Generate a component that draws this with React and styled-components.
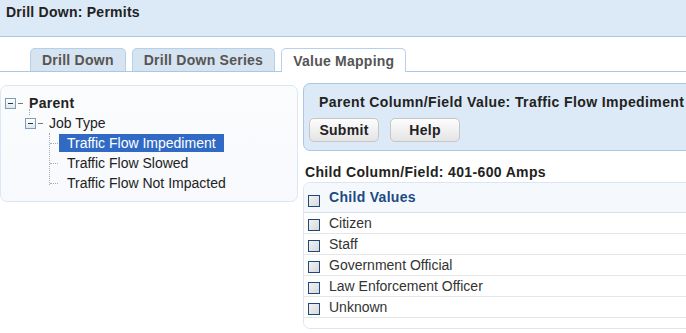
import React from 'react'
import styled, { createGlobalStyle } from 'styled-components'

const Global = createGlobalStyle`
  html, body {
    margin: 0;
    padding: 0;
    background: #fff;
    overflow: hidden;
  }
  body {
    font-family: "Liberation Sans", Arial, sans-serif;
    font-size: 14px;
    color: #222;
  }
`

const Page = styled.div`
  width: 686px;
  height: 333px;
  overflow: hidden;
`

const TitleBar = styled.div`
  height: 37px;
  background: #dce9f6;
  border-bottom: 1px solid #a9c8e6;
  padding: 4px 6px 0;
  box-sizing: border-box;
  font-weight: bold;
  letter-spacing: 0.25px;
  line-height: 17px;
`

const TabBar = styled.div`
  display: flex;
  gap: 6px;
  padding-left: 30px;
  margin-top: 11px;
  height: 23px;
  border-bottom: 1px solid #a9c8e6;
`

const Tab = styled.div`
  height: ${({active}) => active ? '24px' : '23px'};
  box-sizing: border-box;
  padding: 0 11px;
  display: flex;
  align-items: center;
  border: 1px solid #b4d0ea;
  border-bottom: none;
  border-radius: 5px 5px 0 0;
  background: ${({active}) => active ? '#fff' : '#d6e3f0'};
  color: #555;
  font-weight: bold;
  letter-spacing: 0.25px;
  white-space: nowrap;
`

const Body = styled.div`
  display: flex;
  align-items: flex-start;
  gap: 5px;
  margin-top: 11px;
`

const TreePanel = styled.div`
  width: 298px;
  height: 117px;
  flex: none;
  margin-top: 2px;
  box-sizing: border-box;
  border: 1px solid #dbe7f3;
  border-radius: 7px;
  background: linear-gradient(#fbfcfe, #f7f9fc);
  padding-top: 7px;
`

const TreeRow = styled.div`
  display: flex;
  align-items: center;
  height: 20px;
  padding-left: ${({indent}) => indent}px;
  position: relative;
`

const Expander = styled.span`
  width: 11px;
  height: 11px;
  box-sizing: border-box;
  border: 1px solid #7f9db9;
  background: linear-gradient(#fff, #dfe6ee);
  position: relative;
  flex: none;
  &::after {
    content: '';
    position: absolute;
    left: 2px;
    right: 2px;
    top: 4px;
    height: 1px;
    background: #333;
  }
`

const Dash = styled.span`
  width: 5px;
  height: 1px;
  margin: 0 6px 0 2px;
  background: #777;
  flex: none;
`

const NodeLabel = styled.span`
  font-weight: ${({bold}) => bold ? 'bold' : 'normal'};
  letter-spacing: ${({bold}) => bold ? '0.3px' : '0'};
  color: #222;
  white-space: nowrap;
`

const LeafList = styled.div`
  position: relative;
  margin-left: 48px;
  border-left: 1px dotted #aaa;
  height: 52px;
  margin-bottom: -1px;
`

const Leaf = styled.div`
  display: flex;
  align-items: center;
  height: 20px;
  &::before {
    content: '';
    width: 8px;
    border-top: 1px dotted #aaa;
    margin-right: 1px;
  }
`

const LeafText = styled.span`
  height: 18px;
  line-height: 18px;
  padding: 0 8px 0 8px;
  background: ${({selected}) => selected ? '#316ac5' : 'transparent'};
  color: ${({selected}) => selected ? '#fff' : '#222'};
  white-space: nowrap;
`

const VLine = styled.span`
  position: absolute;
  left: 28px;
  top: 16px;
  height: 6px;
  border-left: 1px dotted #aaa;
`

const RightCol = styled.div`
  width: 400px;
  flex: none;
`

const ValuePanel = styled.div`
  height: 68px;
  box-sizing: border-box;
  background: #dce9f6;
  border: 1px solid #a9c8e6;
  border-radius: 7px;
  padding: 10px 0 0 5px;
`

const PanelTitle = styled.div`
  font-weight: bold;
  letter-spacing: 0.4px;
  padding-left: 10px;
  line-height: 17px;
  white-space: nowrap;
`

const Buttons = styled.div`
  display: flex;
  gap: 11px;
  margin-top: 7px;
`

const Button = styled.button`
  width: 70px;
  height: 24px;
  font-family: inherit;
  font-size: 14px;
  font-weight: bold;
  letter-spacing: 0.3px;
  color: #222;
  border: 1px solid #c6c6c6;
  border-radius: 5px;
  background: linear-gradient(#fdfdfd, #e4e4e4);
  padding: 0;
`

const ChildLabel = styled.div`
  font-weight: bold;
  letter-spacing: 0.35px;
  padding-left: 2px;
  margin-top: 13px;
  line-height: 17px;
`

const Table = styled.div`
  margin-top: 1px;
  border: 1px solid #dce6f1;
  border-radius: 7px;
  overflow: hidden;
  padding-bottom: 10px;
`

const HeadRow = styled.div`
  height: 30px;
  box-sizing: border-box;
  display: flex;
  align-items: center;
  background: #f5f9fe;
  border-bottom: 1px solid #d5e0ec;
  padding: 0 0 1px 4px;
  font-weight: bold;
  letter-spacing: 0.3px;
  color: #1c4a82;
`

const Row = styled.div`
  height: 21px;
  box-sizing: border-box;
  display: flex;
  align-items: center;
  border-bottom: 1px solid #e6e6e6;
  padding-left: 4px;
  color: #333;
`

const Check = styled.span`
  width: 12px;
  height: 12px;
  box-sizing: border-box;
  border: 1px solid #1d4a78;
  background: linear-gradient(135deg, #f2f2f2, #d9d9d9);
  margin-right: 9px;
  margin-top: ${({low}) => low ? '7px' : '3px'};
  flex: none;
`

const leaves = ['Traffic Flow Impediment', 'Traffic Flow Slowed', 'Traffic Flow Not Impacted']
const values = ['Citizen', 'Staff', 'Government Official', 'Law Enforcement Officer', 'Unknown']

export default function App() {
  return (
    <Page>
      <Global />
      <TitleBar>Drill Down: Permits</TitleBar>
      <TabBar>
        <Tab>Drill Down</Tab>
        <Tab>Drill Down Series</Tab>
        <Tab active>Value Mapping</Tab>
      </TabBar>
      <Body>
        <TreePanel>
          <TreeRow indent={4}>
            <Expander /><Dash /><NodeLabel bold>Parent</NodeLabel>
            <VLine />
          </TreeRow>
          <TreeRow indent={24}>
            <Expander /><Dash /><NodeLabel>Job Type</NodeLabel>
          </TreeRow>
          <LeafList>
            {leaves.map((l, i) => (
              <Leaf key={l}>
                <LeafText selected={i === 0}>{l}</LeafText>
              </Leaf>
            ))}
          </LeafList>
        </TreePanel>
        <RightCol>
          <ValuePanel>
            <PanelTitle>Parent Column/Field Value: Traffic Flow Impediment</PanelTitle>
            <Buttons>
              <Button>Submit</Button>
              <Button>Help</Button>
            </Buttons>
          </ValuePanel>
          <ChildLabel>Child Column/Field: 401-600 Amps</ChildLabel>
          <Table>
            <HeadRow><Check low />Child Values</HeadRow>
            {values.map(v => (
              <Row key={v}><Check />{v}</Row>
            ))}
          </Table>
        </RightCol>
      </Body>
    </Page>
  )
}
